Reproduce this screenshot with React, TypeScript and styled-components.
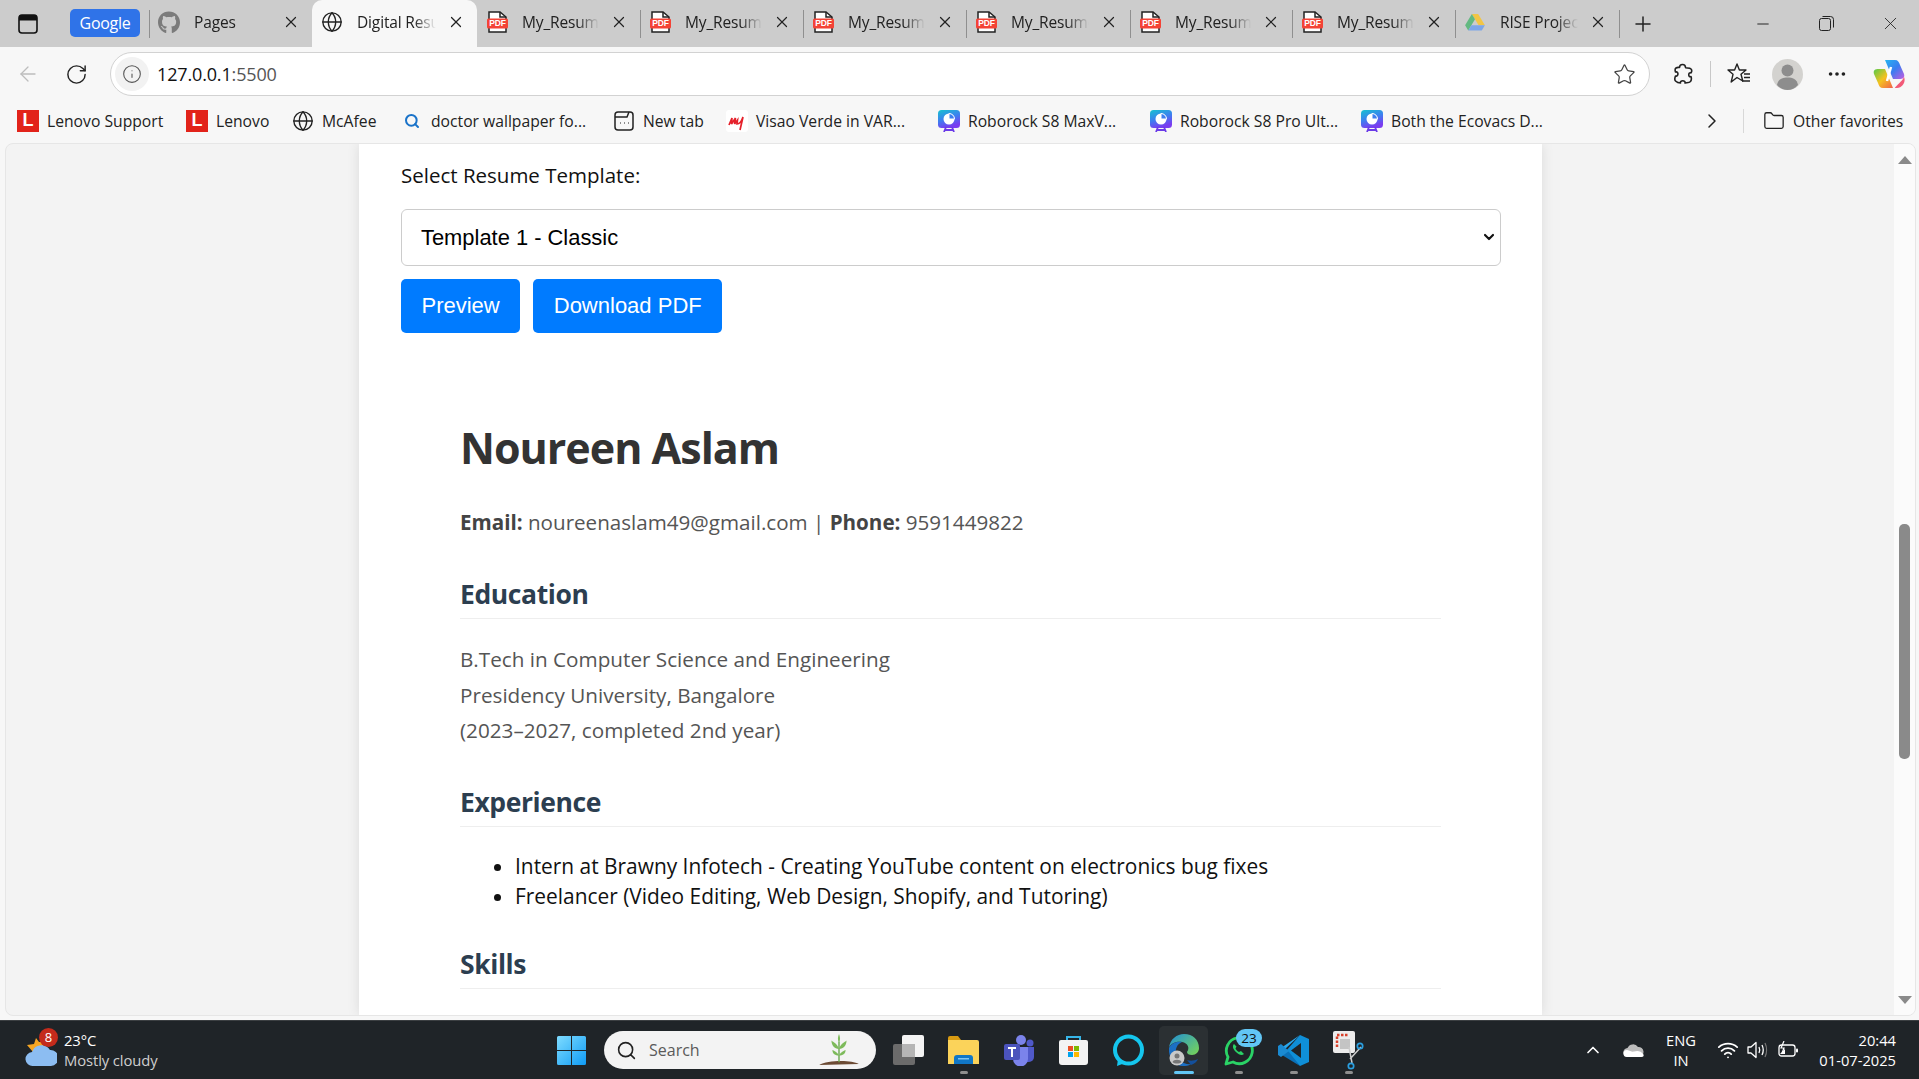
import React from 'react';
import styled, { createGlobalStyle } from 'styled-components';
import { FaGithub } from 'react-icons/fa';
import { X, Plus, Minus, Globe, ArrowLeft, RotateCw, Info, Star, ChevronRight, ChevronDown, Folder, MoreHorizontal, Search, ChevronUp, Wifi } from 'lucide-react';

const GlobalStyle = createGlobalStyle`
    html, body { margin: 0; padding: 0; background: #f7f7f7; overflow: hidden; }
    * { box-sizing: border-box; }
`;

const UI_FONT = `'Open Sans', 'Noto Sans', sans-serif`;

const Screen = styled.div`
    width: 1919px;
    height: 1079px;
    display: flex;
    flex-direction: column;
    font-family: ${UI_FONT};
    overflow: hidden;
`;

/* tab strip */
const TabStrip = styled.div`
    height: 47px;
    background: #cccccc;
    display: flex;
    align-items: stretch;
    flex: none;
`;

const SidebarButton = styled.div`
    width: 56px;
    display: flex;
    align-items: center;
    justify-content: center;
`;

const GooglePill = styled.div`
    margin: 9px 9px 10px 14px;
    width: 70px;
    border-radius: 5px;
    background: #2f73e8;
    color: #fff;
    font-size: 16px;
    display: flex;
    align-items: center;
    justify-content: center;
    letter-spacing: -0.3px;
`;

const Tab = styled.div<{ $w: number; $active?: boolean; $sep?: boolean }>`
    width: ${(p) => p.$w}px;
    display: flex;
    align-items: center;
    position: relative;
    padding: 0 12px 3px 9px;
    font-size: 15.5px;
    letter-spacing: -0.15px;
    color: #222;
    background: ${(p) => (p.$active ? '#f7f7f7' : 'transparent')};
    border-radius: ${(p) => (p.$active ? '10px 10px 0 0' : '0')};
    &::before {
        content: '';
        display: ${(p) => (p.$sep ? 'block' : 'none')};
        position: absolute;
        left: 0;
        top: 10px;
        bottom: 9px;
        width: 1px;
        background: #8f8f8f;
    }
`;

const TabIcon = styled.span`
    width: 22px;
    height: 24px;
    flex: none;
    display: flex;
    align-items: center;
    justify-content: center;
`;

const TabLabel = styled.span`
    flex: 1;
    margin: 0 11px 0 14px;
    overflow: hidden;
    white-space: nowrap;
    -webkit-mask-image: linear-gradient(to right, #000 72%, transparent 100%);
    mask-image: linear-gradient(to right, #000 72%, transparent 100%);
`;

const TabDivider = styled.div`
    width: 1px;
    margin: 10px 0 9px;
    background: #8f8f8f;
    flex: none;
`;

const NewTab = styled.div`
    width: 46px;
    display: flex;
    align-items: center;
    justify-content: center;
`;

const TabSpacer = styled.div`
    flex: 1;
`;

const WindowButton = styled.div<{ $w: number; $inset?: number }>`
    width: ${(p) => p.$w}px;
    padding-left: ${(p) => p.$inset ?? 0}px;
    display: flex;
    align-items: center;
    justify-content: center;
`;

/* address toolbar */
const Toolbar = styled.div`
    height: 49px;
    flex: none;
    background: #f7f7f7;
    display: flex;
    align-items: center;
    padding: 5px 0 0 4px;
`;

const ToolSlot = styled.div<{ $w?: number }>`
    width: ${(p) => p.$w ?? 48}px;
    height: 44px;
    flex: none;
    display: flex;
    align-items: center;
    justify-content: center;
`;

const AddressBar = styled.div`
    width: 1540px;
    height: 44px;
    margin: 0 8px 0 9px;
    background: #fff;
    border: 1.5px solid #d2d2d2;
    border-radius: 22px;
    display: flex;
    align-items: center;
    padding: 0 13px 0 4px;
    flex: none;
`;

const InfoBubble = styled.div`
    width: 34px;
    height: 34px;
    border-radius: 50%;
    background: #f2f2f2;
    display: flex;
    align-items: center;
    justify-content: center;
`;

const UrlText = styled.div`
    margin-left: 8px;
    flex: 1;
    font-size: 18px;
    letter-spacing: -0.15px;
    color: #111;
    span { color: #555; }
`;

const ToolDivider = styled.div`
    width: 1px;
    height: 26px;
    background: #c8c8c8;
    margin: 0 4px;
    flex: none;
`;

/* favourites bar */
const BookmarkBar = styled.div`
    height: 47px;
    flex: none;
    background: #f7f7f7;
    display: flex;
    align-items: center;
    padding: 2px 17px 0 17px;
`;

const Bookmark = styled.div<{ $w: number }>`
    width: ${(p) => p.$w}px;
    flex: none;
    display: flex;
    align-items: center;
    font-size: 15.7px;
    color: #222;
    white-space: nowrap;
`;

const BookmarkIcon = styled.span`
    width: 22px;
    height: 22px;
    margin-right: 8px;
    flex: none;
    display: flex;
    align-items: center;
    justify-content: center;
`;

const LenovoMark = styled.span`
    width: 22px;
    height: 22px;
    background: #e2231a;
    color: #fff;
    font: 700 18px 'Liberation Sans', sans-serif;
    display: flex;
    align-items: center;
    justify-content: center;
`;

const BarSpacer = styled.div`
    flex: 1;
`;

const BarDivider = styled.div`
    width: 1px;
    height: 24px;
    background: #d8d8d8;
    margin: 0 19px 0 19px;
`;

/* page */
const Panel = styled.div`
    height: 873px;
    flex: none;
    margin: 0 3px 0 5px;
    background: #f3f3f3;
    border: 1px solid #e6e6e6;
    border-radius: 8px;
    display: flex;
    overflow: hidden;
`;

const PageArea = styled.div`
    flex: 1;
    padding-left: 353px;
`;

const Card = styled.main`
    width: 1183px;
    height: 100%;
    background: #fff;
    padding: 18px 41px 0 42px;
    box-shadow: 0 0 12px rgba(0, 0, 0, 0.1);
    overflow: hidden;
`;

const FieldLabel = styled.label`
    display: block;
    font-size: 20.5px;
    line-height: 27px;
    color: #111;
`;

const SelectWrap = styled.div`
    position: relative;
    margin-top: 20px;
`;

const TemplateSelect = styled.select`
    display: block;
    width: 100%;
    height: 57px;
    padding: 0 19px;
    font: 21.9px 'Liberation Sans', Arial, sans-serif;
    color: #000;
    background: #fff;
    border: 1px solid #ccc;
    border-radius: 6px;
    appearance: none;
`;

const SelectChevron = styled.span`
    position: absolute;
    right: 4px;
    top: 20px;
    display: flex;
    pointer-events: none;
`;

const Actions = styled.div`
    display: flex;
    gap: 13px;
    margin-top: 13px;
`;

const PrimaryButton = styled.button`
    height: 54px;
    padding: 0 20.5px;
    border: 0;
    border-radius: 5px;
    background: #007bff;
    color: #fff;
    font: 22px 'Liberation Sans', Arial, sans-serif;
`;

const Resume = styled.section`
    padding: 85px 60px 0 59px;
`;

const Name = styled.h1`
    margin: 0;
    font-size: 43px;
    line-height: 60px;
    font-weight: 700;
    letter-spacing: -1px;
    color: #333;
`;

const ContactLine = styled.p`
    margin: 29px 0 0;
    font-size: 20.6px;
    line-height: 30px;
    color: #555;
    b { color: #444; font-weight: 700; }
`;

const SectionTitle = styled.h2<{ $top: number }>`
    margin: ${(p) => p.$top}px 0 0;
    height: 50px;
    padding-top: 7px;
    font-size: 26.5px;
    line-height: 36px;
    font-weight: 700;
    letter-spacing: -0.4px;
    color: #2c3e50;
    border-bottom: 1px solid #eeeeee;
`;

const BodyText = styled.p`
    margin: 23px 0 0;
    font-size: 20.7px;
    line-height: 35.5px;
    color: #555;
`;

const BulletList = styled.ul`
    margin: 24px 0 0;
    padding-left: 55px;
    font-size: 20.9px;
    line-height: 30px;
    color: #111;
`;

const ScrollLane = styled.div`
    width: 21px;
    flex: none;
    background: #fbfbfb;
    display: flex;
    flex-direction: column;
    align-items: center;
    padding-top: 12px;
`;

const ScrollArrow = styled.div<{ $down?: boolean }>`
    width: 0;
    height: 0;
    border-left: 7px solid transparent;
    border-right: 7px solid transparent;
    ${(p) => (p.$down ? 'border-top: 8px solid #8a8a8a;' : 'border-bottom: 8px solid #8a8a8a;')}
    flex: none;
`;

const ScrollThumb = styled.div`
    width: 11px;
    height: 235px;
    margin-top: 360px;
    margin-bottom: 237px;
    background: #8a8a8a;
    border-radius: 5px;
    flex: none;
`;

/* taskbar */
const Taskbar = styled.footer`
    height: 59px;
    margin-top: 4px;
    flex: none;
    background: #1f2428;
    border-top: 1px solid #3b3f42;
    display: flex;
    align-items: center;
    color: #fff;
`;

const Weather = styled.div`
    width: 544px;
    flex: none;
    display: flex;
    align-items: center;
    padding-left: 25px;
`;

const WeatherIcon = styled.div`
    position: relative;
    width: 39px;
    height: 38px;
    flex: none;
`;

const WeatherBadge = styled.span`
    position: absolute;
    left: 14px;
    top: -3px;
    width: 19px;
    height: 19px;
    border-radius: 50%;
    background: #c42b1c;
    font-size: 13px;
    line-height: 19px;
    text-align: center;
`;

const WeatherText = styled.div`
    font-size: 14.8px;
    line-height: 20px;
    letter-spacing: -0.1px;
    span { display: block; color: #cfcfcf; }
`;

const TaskSlot = styled.div<{ $active?: boolean; $dot?: boolean }>`
    position: relative;
    width: 55px;
    height: 49px;
    flex: none;
    display: flex;
    align-items: center;
    justify-content: center;
    &::before {
        content: '';
        display: ${(p) => (p.$active ? 'block' : 'none')};
        position: absolute;
        left: 3px;
        right: 3px;
        top: 0;
        bottom: 0;
        border-radius: 5px;
        background: #2b3033;
    }
    &::after {
        content: '';
        display: ${(p) => (p.$active || p.$dot ? 'block' : 'none')};
        position: absolute;
        bottom: 1px;
        left: 50%;
        transform: translateX(-50%);
        width: ${(p) => (p.$active ? 20 : 8)}px;
        height: 3px;
        border-radius: 2px;
        background: ${(p) => (p.$active ? '#62c6f5' : '#8e8e8e')};
    }
    svg { position: relative; z-index: 1; }
`;

const CountBadge = styled.span`
    position: absolute;
    z-index: 2;
    left: 25px;
    top: 3px;
    width: 26px;
    height: 18px;
    border-radius: 9px;
    background: #62c6f5;
    color: #111;
    font-size: 13.5px;
    line-height: 18px;
    text-align: center;
`;

const SearchBox = styled.div`
    width: 272px;
    height: 38px;
    margin: 0 5px 0 5px;
    flex: none;
    border-radius: 19px;
    background: #f3f3f3;
    color: #5a5a5a;
    font-size: 16px;
    display: flex;
    align-items: center;
    padding: 0 14px 0 12px;
    span { flex: 1; margin-left: 12px; }
`;

const Tray = styled.div`
    flex: 1;
    display: flex;
    align-items: center;
    justify-content: flex-end;
    padding-right: 23px;
`;

const TrayIcon = styled.div<{ $w: number }>`
    width: ${(p) => p.$w}px;
    flex: none;
    display: flex;
    justify-content: center;
`;

const TrayText = styled.div<{ $w: number; $right?: boolean }>`
    width: ${(p) => p.$w}px;
    flex: none;
    font-size: 14.7px;
    line-height: 20px;
    text-align: ${(p) => (p.$right ? 'right' : 'center')};
    white-space: nowrap;
`;

/* drawn icons */
const PdfIcon = () => (
    <svg width="21" height="22" viewBox="0 0 21 22">
        <path d="M2 1h11l6 5v15H2z" fill="#fff" stroke="#222" strokeWidth="1.5" />
        <path d="M13 1v5h6" fill="none" stroke="#222" strokeWidth="1.5" />
        <rect x="0" y="7.500" width="21" height="10" rx="1.500" fill="#f44336" />
        <text x="10.500" y="15.400" textAnchor="middle" fontSize="8.500" fontWeight="700" fill="#fff" fontFamily="Liberation Sans">PDF</text>
    </svg>
);

const DriveIcon = () => (
    <svg width="20" height="18" viewBox="0 0 22 20">
        <path d="M7.500 1h7L22 13.500h-7z" fill="#f2c544" />
        <path d="M7.500 1L0 13.500 3.500 19.500 11 7z" fill="#63b981" />
        <path d="M3.500 19.500h15l3.500-6H7z" fill="#7ca6e8" />
    </svg>
);

const SidebarIcon = () => (
    <svg width="20" height="20" viewBox="0 0 20 20" fill="none">
        <rect x="1" y="1" width="18" height="18" rx="3" stroke="#111" strokeWidth="1.600" />
        <path d="M1 4a3 3 0 0 1 3-3h12a3 3 0 0 1 3 3v2.500H1z" fill="#111" />
    </svg>
);

const NewTabIcon = () => (
    <svg width="20" height="20" viewBox="0 0 20 20" fill="none" stroke="#222" strokeWidth="1.500">
        <rect x="1" y="1" width="18" height="18" rx="3" />
        <path d="M1 6h12l2-5" />
        <path d="M6 12h.5M10 12h.5M14 12h.5" strokeWidth="2" />
    </svg>
);

const MyIcon = () => (
    <svg width="22" height="22" viewBox="0 0 22 22" fill="none">
        <rect width="22" height="22" rx="3" fill="#fff" />
        <path d="M3 15l3-7-0.500 6 4-6-1 6 3-4-0.500 4c3 0 5-4 6-7l-3 13" stroke="#e5202a" strokeWidth="1.700" />
    </svg>
);

const SlidesIcon = ({ id }: { id: string }) => (
    <svg width="22" height="22" viewBox="0 0 22 22">
        <defs>
            <linearGradient id={id} x1="0" y1="0" x2="0.400" y2="1">
                <stop offset="0" stopColor="#17c3cf" />
                <stop offset="0.550" stopColor="#3d7ff0" />
                <stop offset="1" stopColor="#7a3cf0" />
            </linearGradient>
        </defs>
        <rect x="0" y="0" width="22" height="18" rx="3.500" fill={`url(#${id})`} />
        <path d="M8 17l-2 5M14 17l2 5M7 20h8" stroke="#6b3be8" strokeWidth="1.800" />
        <circle cx="11" cy="9" r="5.500" fill="#fff" />
        <path d="M11 9V3.500a5.500 5.500 0 0 1 5.500 5.500z" fill="#3d7ff0" stroke="#fff" />
    </svg>
);

const ExtensionIcon = () => (
    <svg width="21" height="23" viewBox="0 0 21 23" fill="none" stroke="#222" strokeWidth="1.600" strokeLinejoin="round">
        <path d="M7.500 4.500c0-4 6-4 6 0 0 1 4 0 5.500 1.500s.5 3 0 4c-3-1.500-3 5 0 3.500.5 1.500 1 3-.5 5-1.500 1.500-4 1-5.500 1.500 1-3-5.500-3-4.500 0-2 0-3.500-.5-5-2s-.5-3.500 0-5c3 1 3.500-5 0-4-.5-1.500-1-3 .5-4s3-.5 3.500-.5z" />
    </svg>
);

const FavoritesIcon = () => (
    <svg width="24" height="24" viewBox="0 0 24 24" fill="none" stroke="#222" strokeWidth="1.400" strokeLinejoin="round">
        <path d="M10 2l2.400 6h6.600l-5 4.300 1.800 6.700L10 15.500 4.200 20l1.800-7.700L1 8h6.600z" />
        <path d="M17 12h6M17 15.500h6M15 19h8" />
    </svg>
);

const Avatar = () => (
    <svg width="31" height="31" viewBox="0 0 31 31">
        <circle cx="15.500" cy="15.500" r="15.500" fill="#d3d2cf" />
        <circle cx="15.500" cy="11.500" r="6" fill="#8d8d8d" />
        <path d="M5 26c1-6 5.500-7.500 10.500-7.500S25 20 26 26c-3 3.500-6.500 5-10.500 5S8 29.500 5 26z" fill="#8d8d8d" />
    </svg>
);

const CopilotIcon = () => (
    <svg width="32" height="30" viewBox="0 0 32 30">
        <defs>
            <linearGradient id="cpA" x1="0" y1="0" x2="1" y2="1">
                <stop offset="0" stopColor="#27b4f0" />
                <stop offset="0.500" stopColor="#3a7df0" />
                <stop offset="1" stopColor="#c45be0" />
            </linearGradient>
            <linearGradient id="cpB" x1="0" y1="0" x2="1" y2="1">
                <stop offset="0" stopColor="#55c94b" />
                <stop offset="0.500" stopColor="#f4c21f" />
                <stop offset="1" stopColor="#f2604a" />
            </linearGradient>
        </defs>
        <path d="M12 1h10c3 0 4 2 5 5l4 9c1 4-1 5-5 5h-6L12 1z" fill="url(#cpA)" />
        <path d="M20 29H10c-3 0-4-2-5-5L1 15c-1-4 1-5 5-5h6l8 19z" fill="url(#cpB)" />
        <path d="M22 29c-1 0 5-5 8-9l1-2c2 4-1 11-7 11z" fill="#f25a78" />
        <path d="M14 22L18 8" stroke="#fff" strokeWidth="2.500" />
    </svg>
);

const WeatherArt = () => (
    <svg width="32" height="36" viewBox="0 0 32 36">
        <path d="M2 14l7-1 2-6 3 4 6 0-3 6-9 4z" fill="#f6a623" />
        <path d="M8 35a7 7 0 0 1-1-14 10 10 0 0 1 18-2 8 8 0 0 1 1 16z" fill="#8cbdf2" />
    </svg>
);

const WindowsLogo = () => (
    <svg width="29" height="29" viewBox="0 0 29 29">
        <defs>
            <linearGradient id="winG" x1="0" y1="0" x2="1" y2="1">
                <stop offset="0" stopColor="#7fdcff" />
                <stop offset="1" stopColor="#0f9bf5" />
            </linearGradient>
        </defs>
        <path d="M0 1.500A1.500 1.500 0 0 1 1.500 0H14v14H0zM15 0h12.500A1.500 1.500 0 0 1 29 1.500V14H15zM0 15h14v14H1.500A1.500 1.500 0 0 1 0 27.500zM15 15h14v12.500a1.500 1.500 0 0 1-1.500 1.500H15z" fill="url(#winG)" />
    </svg>
);

const PlantIcon = () => (
    <svg width="46" height="32" viewBox="0 0 46 34">
        <path d="M2 33c8-5 34-6 42-1z" fill="#6b4a33" />
        <path d="M23 30V8" stroke="#6aa84f" strokeWidth="1.500" />
        <path d="M23 16c-2-6-6-7-8-9 0 5 3 9 8 9zM23 16c2-6 6-7 8-9 0 5-3 9-8 9zM23 9c-2-3-1-6 0-9 1 3 2 6 0 9zM23 23c-2-4-5-5-7-6 0 4 3 6 7 6zM23 23c2-4 5-5 7-6 0 4-3 6-7 6z" fill="#7dba5a" />
    </svg>
);

const TaskViewIcon = () => (
    <svg width="32" height="30" viewBox="0 0 32 30">
        <rect x="0" y="9" width="22" height="21" rx="2" fill="#6b6b6b" />
        <rect x="9" y="0" width="22" height="22" rx="2" fill="#f4f4f4" />
        <rect x="9" y="9" width="13" height="13" fill="#b5b5b5" />
    </svg>
);

const ExplorerIcon = () => (
    <svg width="31" height="28" viewBox="0 0 31 28">
        <path d="M0 2a2 2 0 0 1 2-2h8l3 4H0z" fill="#d89b12" />
        <path d="M0 4h29a2 2 0 0 1 2 2v22H0z" fill="#fbd35a" />
        <path d="M6 22a3 3 0 0 1 3-3h13a3 3 0 0 1 3 3v6H6z" fill="#1177c6" />
        <rect x="10" y="22" width="11" height="1.500" fill="#7fc4f2" />
    </svg>
);

const TeamsIcon = () => (
    <svg width="30" height="31" viewBox="0 0 30 31">
        <circle cx="17" cy="5" r="5" fill="#7b83eb" />
        <circle cx="26" cy="8" r="3.500" fill="#5059c9" />
        <path d="M20 12h10v10a5 5 0 0 1-5 5h-2z" fill="#5059c9" />
        <path d="M9 12h15v12a7 7 0 0 1-15 0z" fill="#7b83eb" />
        <rect x="0" y="9" width="16" height="16" rx="2" fill="#4b53bc" />
        <path d="M4 13h8M8 13v9" stroke="#fff" strokeWidth="2" />
    </svg>
);

const StoreIcon = () => (
    <svg width="29" height="30" viewBox="0 0 29 30">
        <path d="M8 6V2h13v4" fill="none" stroke="#36b5e8" strokeWidth="2" />
        <path d="M0 7a2 2 0 0 1 2-2h25a2 2 0 0 1 2 2v20a3 3 0 0 1-3 3H3a3 3 0 0 1-3-3z" fill="#f3f3f3" />
        <rect x="9" y="11" width="5" height="5" fill="#ea4f25" />
        <rect x="15" y="11" width="5" height="5" fill="#7db800" />
        <rect x="9" y="17" width="5" height="5" fill="#00a3ee" />
        <rect x="15" y="17" width="5" height="5" fill="#fdb900" />
    </svg>
);

const AlexaIcon = () => (
    <svg width="33" height="33" viewBox="0 0 33 33" fill="none">
        <circle cx="16.500" cy="16" r="13.500" stroke="#15c6ee" strokeWidth="4" />
        <path d="M6 25l-1 7 8-3z" fill="#15c6ee" />
    </svg>
);

const EdgeIcon = () => (
    <svg width="31" height="32" viewBox="0 0 31 32">
        <defs>
            <linearGradient id="edgeG" x1="0" y1="0" x2="1" y2="0.800">
                <stop offset="0" stopColor="#1f8fd8" />
                <stop offset="1" stopColor="#72d05f" />
            </linearGradient>
        </defs>
        <path d="M1 14C2 5 9 0 16 0c9 0 15 6 15 14 0 4-3 7-7 7-3 0-5-1-5-3 3-4 1-9-5-10C8 7 2 10 1 14z" fill="url(#edgeG)" />
        <path d="M1 14c2-4 7-7 13-6-5 2-7 7-6 12 1 6 8 11 15 10-3 2-5 2-8 2C7 32 0 24 1 14z" fill="#1b6fc4" />
        <path d="M23 31c3-1 6-3 7-6-4 2-8 2-11 1z" fill="#134f9b" />
        <circle cx="9" cy="24" r="7.500" fill="#c9c9c9" />
        <circle cx="9" cy="22" r="2.500" fill="#777" />
        <path d="M4.500 28c1-3 8-3 9 0-2 2-7 2-9 0z" fill="#777" />
    </svg>
);

const WhatsappIcon = () => (
    <svg width="30" height="31" viewBox="0 0 30 31" fill="none">
        <path d="M2 29l2-7A13 13 0 1 1 9 27z" stroke="#2ad366" strokeWidth="2.800" strokeLinejoin="round" />
        <path d="M10 9c-2 2-1 5 2 8s6 4 8 2l-3-3-2 1c-1-.5-3-2-3.500-3.500l1-2z" fill="#2ad366" />
    </svg>
);

const VsCodeIcon = () => (
    <svg width="31" height="31" viewBox="0 0 31 31">
        <path d="M22 0l9 4v23l-9 4L8 16z" fill="#0f8fd8" />
        <path d="M22 0L6 15l-3-2 19-13z" fill="#2aa8ee" />
        <path d="M22 31L4 20 0 17l5-5 6 5 11 14z" fill="#0a70b8" />
        <path d="M23 8v15l-10-7.500z" fill="#1f2428" />
        <path d="M0 11l3-2 8 7-8 6-3-2z" fill="#1a8ad2" />
    </svg>
);

const SnipIcon = () => (
    <svg width="31" height="39" viewBox="0 0 31 39" fill="none">
        <rect x="0" y="0" width="22" height="22" rx="2" fill="#ececec" />
        <path d="M4 16V4h12" stroke="#d8402a" strokeWidth="2.500" strokeDasharray="2.500 1.500" />
        <rect x="7" y="8" width="10" height="10" fill="#c4c4c4" />
        <path d="M16 16l3 16M28 16L17 28" stroke="#ccc" strokeWidth="1.500" />
        <circle cx="27" cy="15" r="2.700" stroke="#2a9fe0" strokeWidth="1.700" />
        <circle cx="18" cy="35" r="2.700" stroke="#2a9fe0" strokeWidth="1.700" />
    </svg>
);

const OneDriveIcon = () => (
    <svg width="21" height="14" viewBox="0 0 21 14">
        <path d="M5 14a4.500 4.500 0 0 1-.5-9A6 6 0 0 1 15 4a5 5 0 0 1 1 10z" fill="#bdbdbd" />
        <path d="M4 14a3.500 3.500 0 0 1 0-7c3 1 5 2 7 1.500 3-1 7-1 9.500 3 .5 1 0 2.500-2 2.500z" fill="#fff" />
    </svg>
);

const VolumeIcon = () => (
    <svg width="21" height="18" viewBox="0 0 21 18" fill="none" stroke="#fff" strokeWidth="1.300">
        <path d="M1 6h3l5-4.500v15L4 12H1z" strokeLinejoin="round" />
        <path d="M12 6c1 2 1 4 0 6M15 4c1.500 3 1.500 7 0 10" />
        <path d="M18 2c2 4 2 10 0 14" stroke="#777" />
    </svg>
);

const BatteryIcon = () => (
    <svg width="21" height="18" viewBox="0 0 21 18" fill="none">
        <rect x="1" y="4" width="16" height="11" rx="2.500" stroke="#fff" strokeWidth="1.300" />
        <rect x="18" y="7.500" width="2" height="4" rx="1" fill="#fff" />
        <path d="M2 13l5-5v5z" fill="#fff" />
        <path d="M6 0L3 7h3L4 12" stroke="#fff" strokeWidth="1.200" />
    </svg>
);

const tabItems = ['My_Resume', 'My_Resume', 'My_Resume', 'My_Resume', 'My_Resume', 'My_Resume'];
const tabWidths = [163, 163, 163, 164, 162, 163];

const bookmarks = [
    { label: 'Lenovo Support', w: 169, icon: <LenovoMark>L</LenovoMark> },
    { label: 'Lenovo', w: 106, icon: <LenovoMark>L</LenovoMark> },
    { label: 'McAfee', w: 109, icon: <Globe size={22} strokeWidth={1.5} color="#222" /> },
    { label: 'doctor wallpaper fo...', w: 212, icon: <Search size={16} strokeWidth={3} color="#1a73c9" /> },
    { label: 'New tab', w: 113, icon: <NewTabIcon /> },
    { label: 'Visao Verde in VAR...', w: 212, icon: <MyIcon /> },
    { label: 'Roborock S8 MaxV...', w: 212, icon: <SlidesIcon id="sl1" /> },
    { label: 'Roborock S8 Pro Ult...', w: 211, icon: <SlidesIcon id="sl2" /> },
    { label: 'Both the Ecovacs D...', w: 200, icon: <SlidesIcon id="sl3" /> },
];

export default function App() {
    return (
        <Screen>
            <GlobalStyle />
            <TabStrip>
                <SidebarButton><SidebarIcon /></SidebarButton>
                <GooglePill>Google</GooglePill>
                <Tab $w={163} $sep>
                    <TabIcon><FaGithub size={23} color="#7b7b7b" /></TabIcon>
                    <TabLabel>Pages</TabLabel>
                    <X size={18} strokeWidth={1.6} color="#222" />
                </Tab>
                <Tab $w={165} $active>
                    <TabIcon><Globe size={22} strokeWidth={1.5} color="#222" /></TabIcon>
                    <TabLabel>Digital Resume</TabLabel>
                    <X size={18} strokeWidth={1.6} color="#222" />
                </Tab>
                {tabItems.map((label, i) => (
                    <Tab key={i} $w={tabWidths[i]} $sep={i > 0}>
                        <TabIcon><PdfIcon /></TabIcon>
                        <TabLabel>{label}</TabLabel>
                        <X size={18} strokeWidth={1.6} color="#222" />
                    </Tab>
                ))}
                <Tab $w={164} $sep>
                    <TabIcon><DriveIcon /></TabIcon>
                    <TabLabel>RISE Project</TabLabel>
                    <X size={18} strokeWidth={1.6} color="#222" />
                </Tab>
                <TabDivider />
                <NewTab><Plus size={24} strokeWidth={1.5} color="#222" /></NewTab>
                <TabSpacer />
                <WindowButton $w={63}><Minus size={18} strokeWidth={1.3} color="#222" /></WindowButton>
                <WindowButton $w={64}>
                    <svg width="15" height="15" viewBox="0 0 15 15" fill="none" stroke="#222" strokeWidth="1">
                        <rect x="0.500" y="2.500" width="11" height="12" rx="2" />
                        <path d="M3.500 0.500h8a3 3 0 0 1 3 3v8" />
                    </svg>
                </WindowButton>
                <WindowButton $w={61} $inset={3}><X size={21} strokeWidth={1} color="#222" /></WindowButton>
            </TabStrip>

            <Toolbar>
                <ToolSlot><ArrowLeft size={24} strokeWidth={1.3} color="#bdbdbd" /></ToolSlot>
                <ToolSlot $w={49}><RotateCw size={23} strokeWidth={1.5} color="#222" /></ToolSlot>
                <AddressBar>
                    <InfoBubble><Info size={20} strokeWidth={1.3} color="#555" /></InfoBubble>
                    <UrlText>127.0.0.1<span>:5500</span></UrlText>
                    <Star size={23} strokeWidth={1.3} color="#444" />
                </AddressBar>
                <ToolSlot><ExtensionIcon /></ToolSlot>
                <ToolDivider />
                <ToolSlot><FavoritesIcon /></ToolSlot>
                <ToolSlot $w={49}><Avatar /></ToolSlot>
                <ToolSlot $w={49}><MoreHorizontal size={22} strokeWidth={2} color="#222" /></ToolSlot>
                <ToolSlot $w={55}><CopilotIcon /></ToolSlot>
            </Toolbar>

            <BookmarkBar>
                {bookmarks.map((b) => (
                    <Bookmark key={b.label + b.w} $w={b.w}>
                        <BookmarkIcon>{b.icon}</BookmarkIcon>
                        {b.label}
                    </Bookmark>
                ))}
                <BarSpacer />
                <ChevronRight size={24} strokeWidth={1.5} color="#222" />
                <BarDivider />
                <Bookmark $w={139}>
                    <BookmarkIcon><Folder size={24} strokeWidth={1.4} color="#222" /></BookmarkIcon>
                    Other favorites
                </Bookmark>
            </BookmarkBar>

            <Panel>
                <PageArea>
                    <Card>
                        <FieldLabel htmlFor="template">Select Resume Template:</FieldLabel>
                        <SelectWrap>
                            <TemplateSelect id="template" defaultValue="classic">
                                <option value="classic">Template 1 - Classic</option>
                            </TemplateSelect>
                            <SelectChevron><ChevronDown size={16} strokeWidth={3.2} color="#111" /></SelectChevron>
                        </SelectWrap>
                        <Actions>
                            <PrimaryButton>Preview</PrimaryButton>
                            <PrimaryButton>Download PDF</PrimaryButton>
                        </Actions>
                        <Resume>
                            <Name>Noureen Aslam</Name>
                            <ContactLine>
                                <b>Email:</b> noureenaslam49@gmail.com | <b>Phone:</b> 9591449822
                            </ContactLine>
                            <SectionTitle $top={32}>Education</SectionTitle>
                            <BodyText>
                                B.Tech in Computer Science and Engineering<br />
                                Presidency University, Bangalore<br />
                                (2023–2027, completed 2nd year)
                            </BodyText>
                            <SectionTitle $top={28}>Experience</SectionTitle>
                            <BulletList>
                                <li>Intern at Brawny Infotech - Creating YouTube content on electronics bug fixes</li>
                                <li>Freelancer (Video Editing, Web Design, Shopify, and Tutoring)</li>
                            </BulletList>
                            <SectionTitle $top={28}>Skills</SectionTitle>
                        </Resume>
                    </Card>
                </PageArea>
                <ScrollLane>
                    <ScrollArrow />
                    <ScrollThumb />
                    <ScrollArrow $down />
                </ScrollLane>
            </Panel>

            <Taskbar>
                <Weather>
                    <WeatherIcon>
                        <WeatherArt />
                        <WeatherBadge>8</WeatherBadge>
                    </WeatherIcon>
                    <WeatherText>
                        23°C
                        <span>Mostly cloudy</span>
                    </WeatherText>
                </Weather>
                <TaskSlot><WindowsLogo /></TaskSlot>
                <SearchBox>
                    <Search size={21} strokeWidth={1.8} color="#222" />
                    <span>Search</span>
                    <PlantIcon />
                </SearchBox>
                <TaskSlot><TaskViewIcon /></TaskSlot>
                <TaskSlot $dot><ExplorerIcon /></TaskSlot>
                <TaskSlot><TeamsIcon /></TaskSlot>
                <TaskSlot><StoreIcon /></TaskSlot>
                <TaskSlot><AlexaIcon /></TaskSlot>
                <TaskSlot $active><EdgeIcon /></TaskSlot>
                <TaskSlot $dot><WhatsappIcon /><CountBadge>23</CountBadge></TaskSlot>
                <TaskSlot $dot><VsCodeIcon /></TaskSlot>
                <TaskSlot $dot><SnipIcon /></TaskSlot>
                <Tray>
                    <TrayIcon $w={50}><ChevronUp size={20} strokeWidth={2} color="#fff" /></TrayIcon>
                    <TrayIcon $w={30}><OneDriveIcon /></TrayIcon>
                    <TrayText $w={66}>ENG<br />IN</TrayText>
                    <TrayIcon $w={28}><Wifi size={22} strokeWidth={2} color="#fff" /></TrayIcon>
                    <TrayIcon $w={30}><VolumeIcon /></TrayIcon>
                    <TrayIcon $w={32}><BatteryIcon /></TrayIcon>
                    <TrayText $w={92} $right>20:44<br />01-07-2025</TrayText>
                </Tray>
            </Taskbar>
        </Screen>
    );
}
